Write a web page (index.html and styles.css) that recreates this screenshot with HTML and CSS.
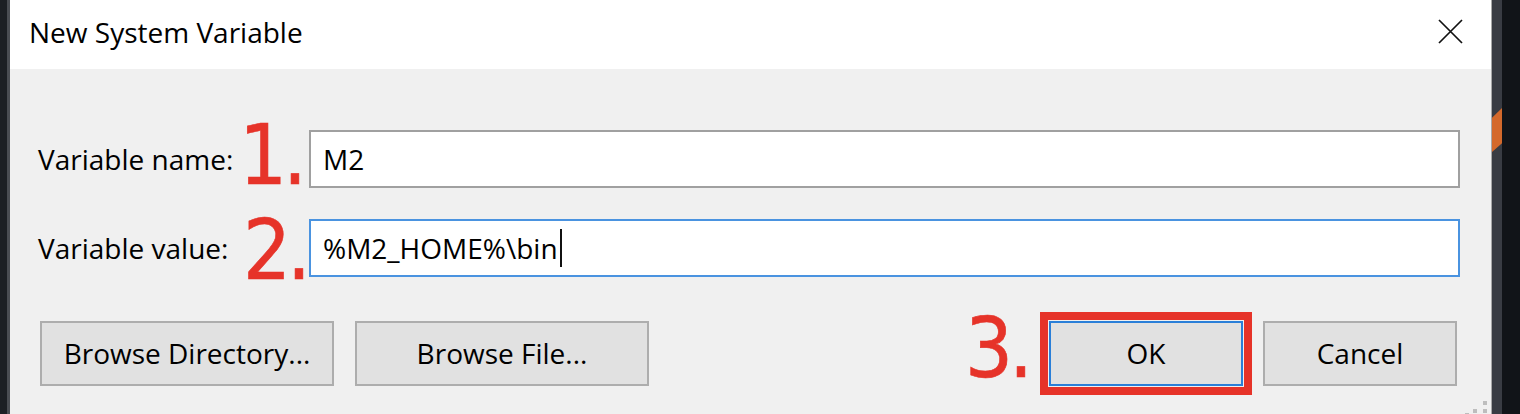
FILE: index.html
```html
<!DOCTYPE html>
<html lang="en">
<head>
<meta charset="utf-8">
<title>New System Variable</title>
<link rel="stylesheet" href="styles.css">
</head>
<body>
<div class="desktop">
  <div class="edge-left"></div>
  <div class="dialog">
    <header class="titlebar">
      <span class="title">New System Variable</span>
      <svg class="close" viewBox="0 0 25 25" aria-label="Close"><path d="M1 1L24 24M24 1L1 24" stroke="#111" stroke-width="1.7" fill="none"/></svg>
    </header>
    <main class="content">
      <div class="row">
        <span class="label">Variable name:</span>
        <span class="step step-1">1.</span>
        <div class="field">M2</div>
      </div>
      <div class="row">
        <span class="label">Variable value:</span>
        <span class="step step-2">2.</span>
        <div class="field field-active">%M2_HOME%\bin<span class="caret"></span></div>
      </div>
      <div class="actions">
        <div class="group group-left">
          <button class="btn btn-wide">Browse Directory...</button>
          <button class="btn btn-wide">Browse File...</button>
        </div>
        <div class="group group-right">
          <span class="step step-3">3.</span>
          <button class="btn btn-default">OK</button>
          <button class="btn">Cancel</button>
        </div>
      </div>
    </main>
    <span class="grip"></span>
  </div>
  <div class="edge-right">
    <div class="edge-strip"><div class="orange"></div></div>
    <div class="edge-dark"></div>
  </div>
</div>
</body>
</html>
```
FILE: styles.css
```css
* { box-sizing: border-box; }
html, body { margin: 0; padding: 0; }
body {
  width: 1520px;
  height: 414px;
  overflow: hidden;
  background: #121519;
  font-family: "Open Sans", "Noto Sans", sans-serif;
  color: #000;
}
.desktop { display: flex; height: 414px; }
.edge-left { width: 7px; background: #1c1f24; flex: none; }
.dialog {
  position: relative;
  flex: 1;
  display: flex;
  flex-direction: column;
  background: #f0f0f0;
  border-left: 3px solid #4a4d53;
  border-right: 1px solid #a8a8a8;
}
.titlebar {
  height: 69px;
  flex: none;
  background: #fff;
  display: flex;
  justify-content: space-between;
  align-items: flex-start;
  padding-left: 19px;
}
.title { font-size: 28px; margin-top: 13px; }
.close { width: 25px; height: 25px; margin-top: 19px; margin-right: 28px; }
.content {
  padding: 61px 31px 0 28px;
  display: flex;
  flex-direction: column;
}
.row { display: flex; align-items: center; height: 58px; }
.row + .row { margin-top: 31px; }
.label { width: 205px; font-size: 28px; flex: none; }
.step {
  font-family: "DejaVu Sans Condensed", "DejaVu Sans", sans-serif;
  font-stretch: condensed;
  font-size: 84px;
  line-height: 1;
  color: #e63329;
  letter-spacing: -4px;
  flex: none;
  -webkit-text-stroke: 0.6px #e63329;
}
.row .step { width: 66px; align-self: flex-start; }
.step-1 { margin-top: -17px; margin-left: -4px; margin-right: 4px; }
.step-2 { margin-top: -11px; }
.field {
  flex: 1;
  height: 58px;
  background: #fff;
  border: 2px solid #a0a0a0;
  padding-left: 12px;
  display: flex;
  align-items: center;
  font-size: 28px;
}
.field-active { border-color: #4a93e0; }
.caret { width: 2px; height: 38px; background: #111; margin-left: 2px; }
.actions {
  margin-top: 39px;
  display: flex;
  justify-content: space-between;
  align-items: center;
}
.group { display: flex; align-items: center; }
.group-left { margin-left: 2px; gap: 21px; }
.group-right { margin-right: 3px; gap: 20px; }
.btn {
  height: 65px;
  width: 194px;
  padding: 0;
  background: #e1e1e1;
  border: 2px solid #adadad;
  font-family: "Open Sans", "Noto Sans", sans-serif;
  font-size: 28px;
  color: #000;
}
.btn-wide { width: 294px; }
.btn-default {
  border-color: #2a7fd8;
  outline: 8px solid #e63329;
  outline-offset: 1px;
}
.step-3 { margin-left: -6px; margin-right: 0; margin-top: -10px; }
.grip {
  position: absolute;
  right: 4px;
  bottom: 1px;
  width: 4px;
  height: 4px;
  background: #bdbdbd;
  box-shadow: -10px 0 #bdbdbd, 0 -8px #bdbdbd, -18px 4px #bdbdbd;
}
.edge-right { width: 28px; flex: none; display: flex; }
.edge-strip { width: 10px; background: #393c43; }
.orange {
  margin-top: 108px;
  height: 44px;
  background: #d4692b;
  clip-path: polygon(0 22%, 100% 0, 100% 80%, 0 100%);
}
.edge-dark { flex: 1; background: #111418; }
```
